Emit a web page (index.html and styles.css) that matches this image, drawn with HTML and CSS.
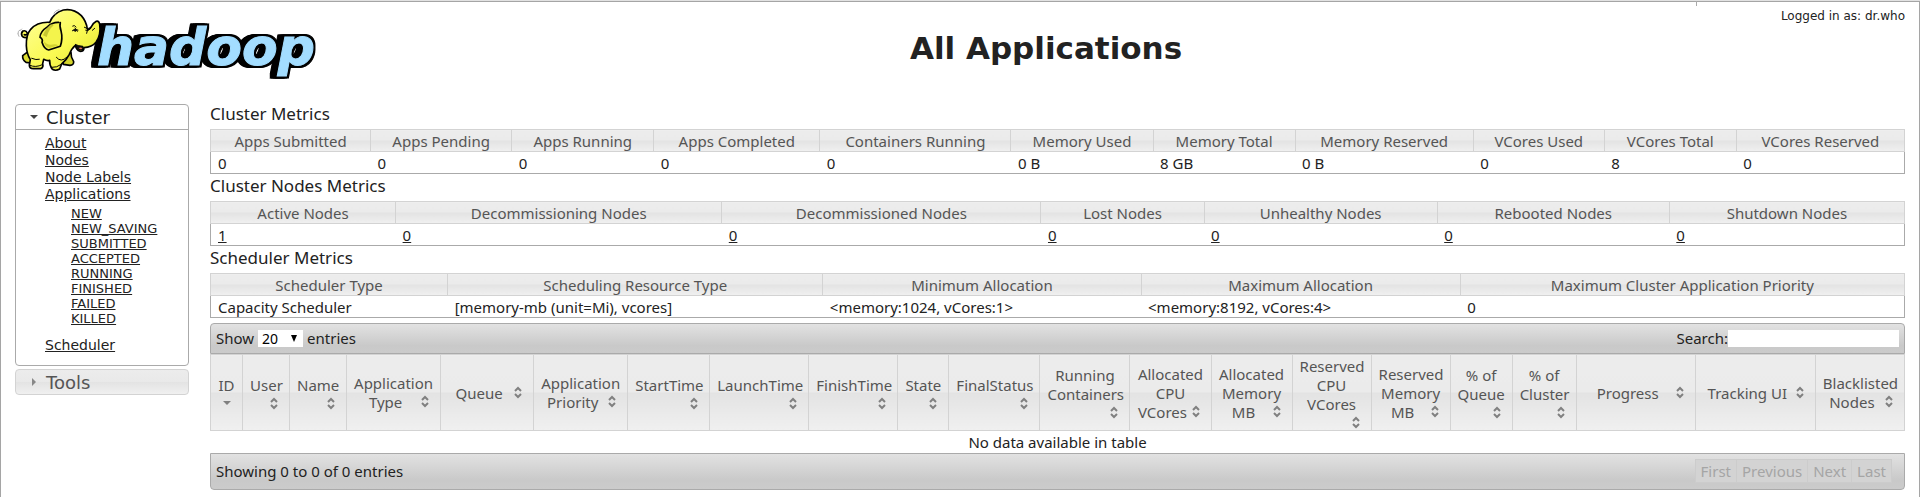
FILE: index.html
```html
<!DOCTYPE html>
<html lang="en">
<head>
<meta charset="utf-8">
<title>All Applications</title>
<link rel="stylesheet" href="styles.css">
</head>
<body>
<div class="page">
<header class="header">
  <a class="logo" href="#" aria-label="hadoop">
    <svg width="310" height="80" viewBox="0 0 310 80">
      <defs>
        <filter id="extrude" x="-10%" y="-20%" width="120%" height="140%" color-interpolation-filters="sRGB">
          <feMorphology in="SourceAlpha" operator="dilate" radius="2" result="edge"/>
          <feOffset in="edge" dx="-2" result="s1"/>
          <feOffset in="edge" dx="-4" result="s2"/>
          <feOffset in="edge" dx="-5" result="s3"/>
          <feMerge>
            <feMergeNode in="s3"/><feMergeNode in="s2"/><feMergeNode in="s1"/><feMergeNode in="edge"/><feMergeNode in="SourceGraphic"/>
          </feMerge>
        </filter>
        <linearGradient id="skin" x1="0" y1="0" x2="1" y2="1">
          <stop offset="0" stop-color="#ffff9c"/><stop offset=".55" stop-color="#fafa52"/><stop offset="1" stop-color="#dede2c"/>
        </linearGradient>
      </defs>
      <text class="logo-text" x="87" y="60" filter="url(#extrude)">hadoop</text>
      <g transform="scale(.3333)" stroke="#000" stroke-linejoin="round" stroke-linecap="round">
        <path d="M54 96Q42 101 36 93Q32 84 39 78Q48 75 52 84Q51 92 43 89" fill="#fafa52" stroke-width="5"/>
        <path d="M50 143L38 152Q37 165 48 172L64 174L70 150Z" fill="#dcdc30" stroke-width="5"/>
        <path d="M183 142Q182 156 191 170Q192 180 180 181L160 178L158 155Z" fill="#d4d42c" stroke-width="5"/>
        <path d="M119 52Q82 50 62 73Q48 90 49 122Q50 146 61 164L58 180Q58 191 70 191L92 191Q101 188 98 176L101 163Q112 169 119 166Q118 181 127 193Q137 199 149 192L155 177Q168 167 178 148Q185 130 196 121Q199 135 210 139Q222 139 222 128Q246 127 258 112Q274 88 269 57Q266 47 259 49Q247 56 244 65Q238 76 232 72Q229 49 214 32Q190 9 160 15Q130 24 119 52Z" fill="url(#skin)" stroke-width="5"/>
        <path d="M151 53Q127 51 113 65Q90 80 90 97Q100 103 96 112Q103 134 116 135L151 124Q159 101 153 77Q148 62 151 53Z" fill="#f4f44c" stroke="none"/>
        <path d="M146 52Q127 51 113 65Q90 80 90 97Q100 103 96 112Q103 134 116 135L151 124Q159 101 153 77Q148 62 151 53" fill="none" stroke-width="5"/>
        <path d="M123 58Q108 69 99 91L110 96Q116 74 131 61Z" fill="#c6c632" stroke="none"/>
        <path d="M101 108Q105 127 118 129L145 121Q138 115 122 119Q109 119 101 108Z" fill="#d2d230" stroke="none"/>
        <path d="M197 119Q205 123 219 124L220 132Q215 138 207 134Q199 130 197 119Z" fill="#111" stroke-width="3"/>
        <path d="M206 129Q213 126 217 130Q213 136 206 129Z" fill="#e76a54" stroke="none"/>
        <path d="M188 63Q194 58 198 66M187 77Q193 70 204 75M195 69L202 79M223 67Q232 75 243 68M227 76Q234 80 240 72M230 85L232 77M254 70L247 76M65 160Q79 166 88 163M139 157Q153 174 170 157M60 181Q76 189 97 179M127 187Q141 188 152 179" fill="none" stroke-width="3"/>
        <path d="M188 75Q196 70 201 76L196 81Z" fill="#111" stroke="none"/>
        <path d="M24 87L27 94M29 75Q23 79 24 86M35 72L30 77M132 24Q136 16 147 14M134 29L137 25" fill="none" stroke="#888" stroke-width="2"/>
      </g>
    </svg>
  </a>
  <h1 class="title">All Applications</h1>
  <div class="user">Logged in as: dr.who</div>
  <span class="tick"></span>
</header>
<div class="layout">
  <nav class="side">
    <section class="panel">
      <h3 class="panel-head"><svg width="8" height="8" viewBox="0 0 8 8"><path d="M0 2H8L4 6Z" fill="#444"/></svg>Cluster</h3>
      <ul class="menu">
        <li><a href="#">About</a></li>
        <li><a href="#">Nodes</a></li>
        <li><a href="#">Node Labels</a></li>
        <li><a href="#">Applications</a>
          <ul class="states">
            <li><a href="#">NEW</a></li>
            <li><a href="#">NEW_SAVING</a></li>
            <li><a href="#">SUBMITTED</a></li>
            <li><a href="#">ACCEPTED</a></li>
            <li><a href="#">RUNNING</a></li>
            <li><a href="#">FINISHED</a></li>
            <li><a href="#">FAILED</a></li>
            <li><a href="#">KILLED</a></li>
          </ul>
        </li>
        <li><a href="#">Scheduler</a></li>
      </ul>
    </section>
    <h3 class="panel-head closed"><svg width="8" height="8" viewBox="0 0 8 8"><path d="M2 0V8L6 4Z" fill="#888"/></svg>Tools</h3>
  </nav>
  <main class="content">
    <h2 class="caption">Cluster Metrics</h2>
    <table class="metrics cluster">
      <thead><tr><th>Apps Submitted</th><th>Apps Pending</th><th>Apps Running</th><th>Apps Completed</th><th>Containers Running</th><th>Memory Used</th><th>Memory Total</th><th>Memory Reserved</th><th>VCores Used</th><th>VCores Total</th><th>VCores Reserved</th></tr></thead>
      <tbody><tr><td>0</td><td>0</td><td>0</td><td>0</td><td>0</td><td>0 B</td><td>8 GB</td><td>0 B</td><td>0</td><td>8</td><td>0</td></tr></tbody>
    </table>
    <h2 class="caption">Cluster Nodes Metrics</h2>
    <table class="metrics nodes">
      <thead><tr><th>Active Nodes</th><th>Decommissioning Nodes</th><th>Decommissioned Nodes</th><th>Lost Nodes</th><th>Unhealthy Nodes</th><th>Rebooted Nodes</th><th>Shutdown Nodes</th></tr></thead>
      <tbody><tr><td><a href="#">1</a></td><td><a href="#">0</a></td><td><a href="#">0</a></td><td><a href="#">0</a></td><td><a href="#">0</a></td><td><a href="#">0</a></td><td><a href="#">0</a></td></tr></tbody>
    </table>
    <h2 class="caption">Scheduler Metrics</h2>
    <table class="metrics scheduler">
      <thead><tr><th>Scheduler Type</th><th>Scheduling Resource Type</th><th>Minimum Allocation</th><th>Maximum Allocation</th><th>Maximum Cluster Application Priority</th></tr></thead>
      <tbody><tr><td>Capacity Scheduler</td><td>[memory-mb (unit=Mi), vcores]</td><td>&lt;memory:1024, vCores:1&gt;</td><td>&lt;memory:8192, vCores:4&gt;</td><td>0</td></tr></tbody>
    </table>
    <div class="bar bar-top">
      <label class="length">Show <span class="pick"><select><option>20</option><option>40</option><option>60</option></select><svg width="6" height="7" viewBox="0 0 6 7"><path d="M0 0H6L3 7Z"/></svg></span> entries</label>
      <label class="search">Search:<input type="text"></label>
    </div>
    <svg class="symbols" width="0" height="0"><symbol id="sort" viewBox="0 0 16 16"><path d="M5 7L8 4L11 7M5 10L8 13L11 10" fill="none" stroke="#808080" stroke-width="2"/></symbol></svg>
    <table class="apps">
      <thead><tr>
        <th>ID<svg class="sort"><path d="M4 6H12L8 10Z" fill="#808080"/></svg></th>
        <th>User<svg class="sort"><use href="#sort"/></svg></th>
        <th>Name<svg class="sort"><use href="#sort"/></svg></th>
        <th>Application Type<svg class="sort"><use href="#sort"/></svg></th>
        <th>Queue<svg class="sort"><use href="#sort"/></svg></th>
        <th>Application Priority<svg class="sort"><use href="#sort"/></svg></th>
        <th>StartTime<svg class="sort"><use href="#sort"/></svg></th>
        <th>LaunchTime<svg class="sort"><use href="#sort"/></svg></th>
        <th>FinishTime<svg class="sort"><use href="#sort"/></svg></th>
        <th>State<svg class="sort"><use href="#sort"/></svg></th>
        <th>FinalStatus<svg class="sort"><use href="#sort"/></svg></th>
        <th>Running Containers<svg class="sort"><use href="#sort"/></svg></th>
        <th>Allocated CPU VCores<svg class="sort"><use href="#sort"/></svg></th>
        <th>Allocated Memory MB<svg class="sort"><use href="#sort"/></svg></th>
        <th>Reserved CPU VCores<svg class="sort"><use href="#sort"/></svg></th>
        <th>Reserved Memory MB<svg class="sort"><use href="#sort"/></svg></th>
        <th>% of Queue<svg class="sort"><use href="#sort"/></svg></th>
        <th>% of Cluster<svg class="sort"><use href="#sort"/></svg></th>
        <th>Progress<svg class="sort"><use href="#sort"/></svg></th>
        <th>Tracking UI<svg class="sort"><use href="#sort"/></svg></th>
        <th>Blacklisted Nodes<svg class="sort"><use href="#sort"/></svg></th>
      </tr></thead>
      <tbody><tr><td colspan="21">No data available in table</td></tr></tbody>
    </table>
    <div class="bar bar-bottom">
      <span>Showing 0 to 0 of 0 entries</span>
      <div class="pager"><button disabled>First</button><button disabled>Previous</button><button disabled>Next</button><button disabled>Last</button></div>
    </div>
  </main>
</div>
</div>
</body>
</html>
```
FILE: styles.css
```css
* { box-sizing: border-box; }
body {
  margin: 0;
  background: #fff;
  color: #222;
  font: 15px/19px "Noto Sans", "Open Sans", sans-serif;
  border-top: 1px solid #e2e2e2;
}
a { color: #222; }
.page {
  min-height: calc(100vh - 1px);
  border: 1px solid #a5a5a5;
  border-bottom: 0;
}
.header {
  position: relative;
  display: grid;
  grid-template-columns: 370px 1fr 200px;
  height: 100px;
  padding: 3px 14px 0 9px;
  font-family: "DejaVu Sans", sans-serif;
}
.logo svg { display: block; }
.logo-text {
  font: italic bold 52px "DejaVu Sans", sans-serif;
  fill: #a3ddff;
  stroke: #a3ddff;
  stroke-width: 1px;
}
.title {
  margin: 25px 0 0;
  padding-left: 7px;
  text-align: center;
  font-size: 31px;
  line-height: 36px;
}
.user {
  padding-top: 3px;
  text-align: right;
  font-size: 12px;
  line-height: 16px;
}
.tick {
  position: absolute;
  top: -2px;
  right: 222px;
  width: 1px;
  height: 6px;
  background: #aaa;
}
.layout {
  display: grid;
  grid-template-columns: 174px 1fr;
  column-gap: 21px;
  padding: 0 14px 8px 14px;
}
.side {
  padding-top: 2px;
  font-family: "DejaVu Sans", sans-serif;
}
.panel {
  border: 1px solid #aaa;
  border-radius: 4px;
  margin-bottom: 3px;
}
.panel-head {
  display: flex;
  align-items: center;
  gap: 8px;
  margin: 0;
  padding-left: 14px;
  height: 25px;
  border-bottom: 1px solid #aaa;
  font-size: 18px;
  font-weight: 400;
}
.closed {
  height: 26px;
  border: 1px solid #d3d3d3;
  border-radius: 4px;
  color: #555;
  background: linear-gradient(#ececec, #e9e9e9 50%, #e3e3e3 50%, #f0f0f0);
}
.menu, .states { margin: 0; padding: 0; list-style: none; }
.menu {
  padding: 5px 0 11px 29px;
  font-size: 14px;
  line-height: 17px;
}
.states {
  padding: 3px 0 11px 26px;
  font-size: 13px;
  line-height: 15px;
}
.caption {
  margin: 0;
  font-size: 17px;
  font-weight: 400;
  line-height: 24px;
  height: 27px;
}
table {
  width: 100%;
  table-layout: fixed;
  border-collapse: collapse;
}
th {
  border: 1px solid #d3d3d3;
  color: #555;
  font-weight: 400;
  background: linear-gradient(#ececec, #ebebeb 50%, #e3e3e3 50%, #f0f0f0);
}
td { text-align: left; }
.metrics { border: 1px solid #aaa; }
.metrics th { height: 22px; padding: 2px 7px 0; }
.metrics td { height: 22px; padding: 2px 7px 0; }
.cluster th:nth-child(1) { width: 160px; }
.cluster th:nth-child(2) { width: 141px; }
.cluster th:nth-child(3) { width: 142px; }
.cluster th:nth-child(4) { width: 166px; }
.cluster th:nth-child(5) { width: 191px; }
.cluster th:nth-child(6) { width: 142px; }
.cluster th:nth-child(7) { width: 142px; }
.cluster th:nth-child(8) { width: 178px; }
.cluster th:nth-child(9) { width: 131px; }
.cluster th:nth-child(10) { width: 132px; }
.cluster th:nth-child(11) { width: 168px; }
.nodes th:nth-child(1) { width: 185px; }
.nodes th:nth-child(2) { width: 326px; }
.nodes th:nth-child(3) { width: 319px; }
.nodes th:nth-child(4) { width: 163px; }
.nodes th:nth-child(5) { width: 233px; }
.nodes th:nth-child(6) { width: 232px; }
.nodes th:nth-child(7) { width: 235px; }
.scheduler th:nth-child(1) { width: 237px; }
.scheduler th:nth-child(2) { width: 375px; }
.scheduler th:nth-child(3) { width: 318px; }
.scheduler th:nth-child(4) { width: 319px; }
.scheduler th:nth-child(5) { width: 444px; }
.bar {
  display: flex;
  align-items: center;
  justify-content: space-between;
  padding: 0 5px;
  border: 1px solid #aaa;
  background: linear-gradient(#e2e2e2, #c9c9c9 75%, #cbcbcb);
}
.bar-top {
  height: 31px;
  margin-top: 5px;
  border-radius: 4px 4px 0 0;
}
.bar-bottom {
  height: 37px;
  border-radius: 0 0 4px 4px;
}
.length, .search { display: flex; align-items: center; }
.length { gap: 4px; }
.pick { position: relative; display: flex; }
.pick select {
  appearance: none;
  width: 45px;
  height: 17px;
  padding: 0 4px;
  border: 0;
  border-radius: 0;
  background: #fff;
  color: #000;
  font: 14px/17px "Noto Sans", sans-serif;
}
.pick svg {
  position: absolute;
  right: 6px;
  top: 5px;
  pointer-events: none;
}
.search input {
  width: 171px;
  height: 17px;
  padding: 0 2px;
  border: 0;
  font: inherit;
}
.symbols { display: block; }
.apps th { height: 76px; padding: 1px 7px 0; vertical-align: middle; }
.apps td { height: 22px; padding: 1px 0 0; text-align: center; }
.sort {
  float: right;
  width: 16px;
  height: 16px;
}
.apps th:nth-child(1) { width: 32px; }
.apps th:nth-child(2) { width: 47px; }
.apps th:nth-child(3) { width: 57px; }
.apps th:nth-child(4) { width: 94px; }
.apps th:nth-child(5) { width: 93px; }
.apps th:nth-child(6) { width: 94px; }
.apps th:nth-child(7) { width: 82px; }
.apps th:nth-child(8) { width: 99px; }
.apps th:nth-child(9) { width: 89px; }
.apps th:nth-child(10) { width: 51px; }
.apps th:nth-child(11) { width: 91px; }
.apps th:nth-child(12) { width: 90px; }
.apps th:nth-child(13) { width: 81px; }
.apps th:nth-child(14) { width: 81px; }
.apps th:nth-child(15) { width: 79px; }
.apps th:nth-child(16) { width: 79px; }
.apps th:nth-child(17) { width: 62px; }
.apps th:nth-child(18) { width: 64px; }
.apps th:nth-child(19) { width: 119px; }
.apps th:nth-child(20) { width: 120px; }
.apps th:nth-child(21) { width: 89px; }
.pager { display: flex; padding-right: 7px; }
.pager button {
  height: 24px;
  padding: 0 5px;
  border: 1px solid #ccc;
  margin-left: -1px;
  background: #d3d3d3;
  color: #a5a5a5;
  font: inherit;
}
```
